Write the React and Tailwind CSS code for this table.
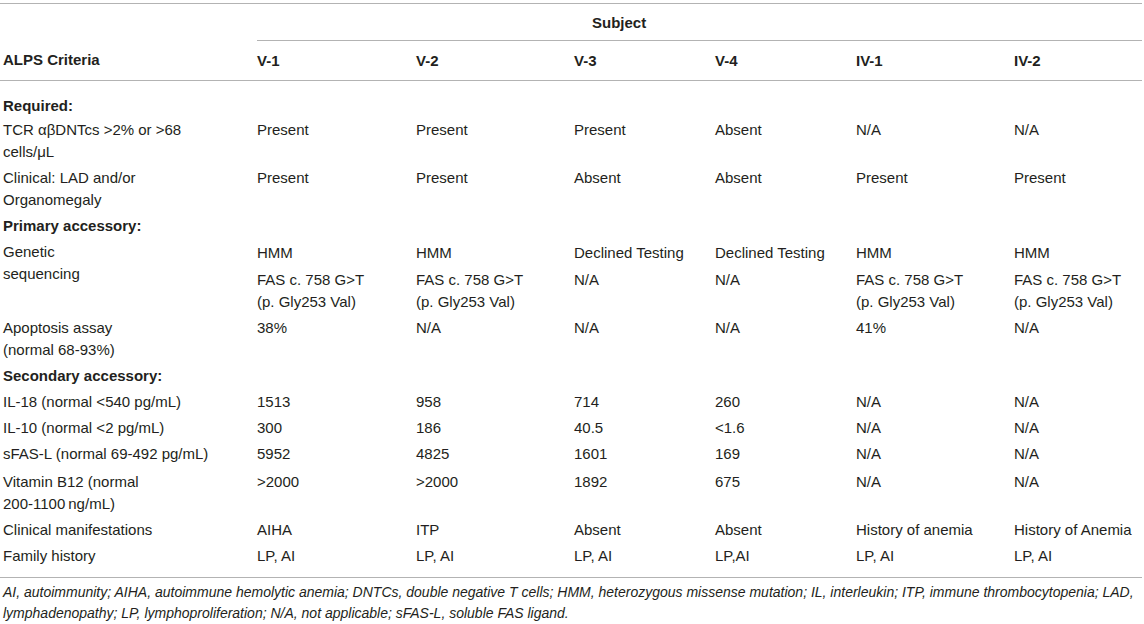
import React from "react";

const cols = ["V-1", "V-2", "V-3", "V-4", "IV-1", "IV-2"];

const fas = (
  <>
    FAS c. 758 G&gt;T
    <br />
    (p. Gly253 Val)
  </>
);

// body rows: [label, values, extra padding] or a section heading string
const rows = [
  "Required:",
  [<>TCR αβDNTcs &gt;2% or &gt;68 <span className="whitespace-nowrap">cells/μL</span></>, ["Present", "Present", "Present", "Absent", "N/A", "N/A"]],
  [<>Clinical: LAD and/or Organomegaly</>, ["Present", "Present", "Absent", "Absent", "Present", "Present"]],
  "Primary accessory:",
  "genetic",
  [<>Apoptosis assay<br />(normal 68-93%)</>, ["38%", "N/A", "N/A", "N/A", "41%", "N/A"]],
  "Secondary accessory:",
  [<>IL-18 (normal &lt;540 pg/mL)</>, ["1513", "958", "714", "260", "N/A", "N/A"]],
  [<>IL-10 (normal &lt;2 pg/mL)</>, ["300", "186", "40.5", "<1.6", "N/A", "N/A"]],
  [<>sFAS-L (normal 69-492 pg/mL)</>, ["5952", "4825", "1601", "169", "N/A", "N/A"]],
  [<>Vitamin B12 (normal <span className="whitespace-nowrap">200-1100&#8201;ng/mL)</span></>, [">2000", ">2000", "1892", "675", "N/A", "N/A"], "pt-[4px]"],
  [<>Clinical manifestations</>, ["AIHA", "ITP", "Absent", "Absent", "History of anemia", "History of Anemia"]],
  [<>Family history</>, ["LP, AI", "LP, AI", "LP, AI", "LP,AI", "LP, AI", "LP, AI"], "pb-[10px]"],
];

const labelCls = "align-top pl-[3px] pr-[30px] py-[2px] text-left font-normal";
const cellCls = "align-top pl-0 pr-[10px] py-[2px]";

export default function App() {
  return (
    <div
      className="w-[1144px] h-[624px] bg-white text-[#231f20] text-[15px] leading-[22px]"
      style={{ fontFamily: '"Liberation Sans", Arial, sans-serif' }}
    >
      <table className="table-fixed w-[1142px] border-collapse border-t border-[#b3b3b3] mt-[3px]">
        <colgroup>
          <col className="w-[257px]" />
          <col className="w-[159px]" />
          <col className="w-[158px]" />
          <col className="w-[141px]" />
          <col className="w-[141px]" />
          <col className="w-[158px]" />
          <col className="w-[128px]" />
        </colgroup>
        <thead>
          <tr>
            <th className="h-[37px]"></th>
            <th colSpan={6} className="h-[37px] border-b border-[#b3b3b3] text-left font-bold pl-[335px] pt-[2px]">
              Subject
            </th>
          </tr>
          <tr className="border-b border-[#b3b3b3]">
            <th className="text-left font-bold pl-[3px] h-[40px]">ALPS Criteria</th>
            {cols.map((c) => (
              <th key={c} className="text-left font-bold h-[40px]">
                {c}
              </th>
            ))}
          </tr>
        </thead>
        <tbody className="border-b border-[#b3b3b3]">
          {rows.map((r, i) => {
            if (r === "genetic") {
              return (
                <React.Fragment key={i}>
                  <tr>
                    <td rowSpan={2} className={labelCls}>
                      Genetic
                      <br />
                      sequencing
                    </td>
                    {["HMM", "HMM", "Declined Testing", "Declined Testing", "HMM", "HMM"].map((v, j) => (
                      <td key={j} className={cellCls + " pt-[3px] pb-[3px]"}>
                        {v}
                      </td>
                    ))}
                  </tr>
                  <tr>
                    {[fas, fas, "N/A", "N/A", fas, fas].map((v, j) => (
                      <td key={j} className={cellCls}>
                        {v}
                      </td>
                    ))}
                  </tr>
                </React.Fragment>
              );
            }
            if (typeof r === "string") {
              const pad = i === 0 ? " pt-[14px] pb-0" : "";
              return (
                <tr key={i}>
                  <td colSpan={7} className={"pl-[3px] py-[2px] font-bold" + pad}>
                    {r}
                  </td>
                </tr>
              );
            }
            const pad = r[2] || "";
            return (
              <tr key={i}>
                <td className={labelCls + " " + pad}>{r[0]}</td>
                {r[1].map((v, j) => (
                  <td key={j} className={cellCls + " " + pad}>
                    {v}
                  </td>
                ))}
              </tr>
            );
          })}
        </tbody>
      </table>
      <p className="italic text-[14px] leading-[21px] pl-[3px] pr-[4px] pt-[4px] w-[1144px]">
        AI, autoimmunity; AIHA, autoimmune hemolytic anemia; DNTCs, double negative T cells; HMM, heterozygous missense
        mutation; IL, interleukin; ITP, immune thrombocytopenia; LAD, lymphadenopathy; LP, lymphoproliferation; N/A, not
        applicable; sFAS-L, soluble FAS ligand.
      </p>
    </div>
  );
}
